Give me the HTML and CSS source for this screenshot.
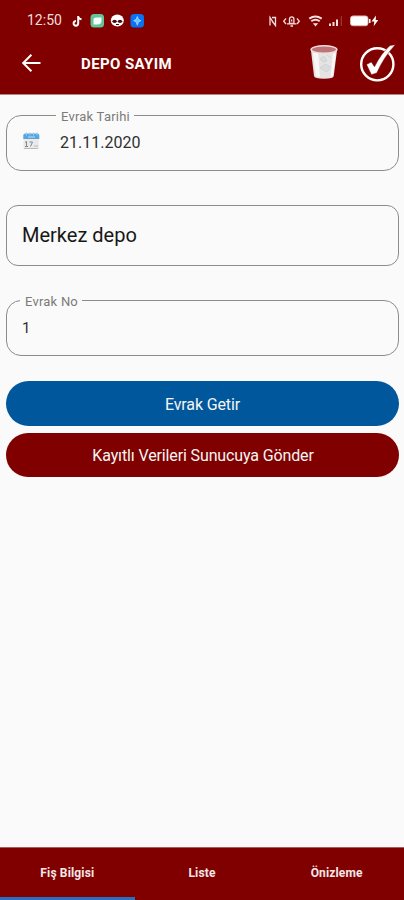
FILE: index.html
```html
<!DOCTYPE html>
<html lang="tr">
<head>
<meta charset="utf-8">
<title>Depo Sayım</title>
<link rel="stylesheet" href="styles.css">
</head>
<body>
<header class="header">
  <div class="status">
    <span class="clock">12:50</span>
    <svg class="status-apps" width="74" height="16" viewBox="0 0 74 16">
      <path d="M7.2 3v7.3a2.3 2.3 0 1 1-2.3-2.2M7.2 3c.2 2 1.600 3.100 3.300 3.200" fill="none" stroke="#fff" stroke-width="2"/>
      <rect x="19.500" y="1" width="13.500" height="13.500" rx="3.500" fill="#63c49b"/>
      <path d="M22.500 6.500q0-2 3-2h5v3q0 4-4 4h-4z" fill="#f3fff8"/>
      <ellipse cx="46.300" cy="7.500" rx="6.500" ry="5.900" fill="#fff"/>
      <ellipse cx="43.600" cy="8.300" rx="2.200" ry="1.600" fill="#4b0a0a"/><ellipse cx="49" cy="8.300" rx="2.200" ry="1.600" fill="#4b0a0a"/>
      <path d="M45 11.500h3" stroke="#4b0a0a"/>
      <rect x="59.500" y="1" width="13.500" height="13.500" rx="3.500" fill="#0873f4"/>
      <path d="M66.300 3.500l1.200 3 2.500 1.200-2.500 1.100-1.200 3.400-1.200-3.400-2.500-1.100 2.500-1.200z" fill="#75bdff" stroke="#b9e4ff" stroke-width=".7"/>
    </svg>
    <svg class="status-system" width="114" height="16" viewBox="0 0 114 16">
      <g fill="none" stroke="#f6dede" stroke-width="1.300">
        <path d="M3 12.500V4.500l4 6M5 4.500h3.500v8L5 8"/>
        <path d="M19 5.500l-2.300 2.700L19 11M30 5.500l2.300 2.700L30 11M22.500 10.500V6a2.200 2.200 0 0 1 4.400 0v4.500zM20 10.800h9.400M23.500 13h2.500M24.700 6.500v2"/>
        <path d="M42.300 5.600q6-4.400 12.400 0M44.300 8.300q4.200-3 8.400 0" stroke-width="2"/>
      </g>
      <path d="M45.800 10.300h5.400l-2.700 3.200zM62 10.500h2v2.500h-2zM65.500 9h2v4h-2zM69 6.500h2v6.500h-2z" fill="#f6dede"/>
      <path d="M73.800 3h1v10h-1z" fill="#a84444"/>
      <rect x="83.500" y="3" width="17.500" height="9.700" rx="2.500" fill="#fff" stroke="#e8b8b8"/>
      <path d="M102 6h1.500v4H102zM109 2.500l-4.500 6h2.800l-.6 4.800 4.600-6.200h-2.600z" fill="#fff"/>
    </svg>
  </div>
  <div class="toolbar">
    <svg class="back" width="20" height="20" viewBox="0 0 20 20"><path d="M19.500 10H2.500M10.400 1.800L2.200 10l8.200 8.200" fill="none" stroke="#fff" stroke-width="2"/></svg>
    <h1 class="title">DEPO SAYIM</h1>
    <svg class="trash" width="28" height="36" viewBox="0 0 28 36">
      <path d="M.8 5L4 32q.3 2.700 10 2.700T23.700 32l3.500-27z" fill="#e5e3e3"/>
      <path d="M3 9l3 23q2 1 4 1L8 9zM23 9l-2.500 24 2.500-1 3-23z" fill="#f8f6f6"/>
      <path d="M10 15l4-3 3 5-4 1zM10 24l5-4 6 3-4 5zM17 11l4 3" fill="#dadcdc" stroke="#d2d4d4"/>
      <ellipse cx="14" cy="5.500" rx="12.900" ry="3.800" fill="#bd7479" stroke="#f0dede" stroke-width="1.400"/>
    </svg>
    <svg class="check" width="38" height="40" viewBox="0 0 38 40">
      <circle cx="18.300" cy="21.300" r="16.100" fill="none" stroke="#fff" stroke-width="2.400"/>
      <path d="M7.500 21.500l4.800-2.600 3.200 4.800Q22 10.500 31 2.500l5.300-.8Q24.500 14.500 17.800 30l-5.400 1.700z" fill="#fff" stroke="#800000" stroke-width=".5"/>
    </svg>
  </div>
</header>
<main class="content">
  <div class="field field-date">
    <span class="label">Evrak Tarihi</span>
    <svg class="calendar" width="17" height="18" viewBox="0 0 17 18">
      <rect x=".5" y="6" width="15.500" height="11" fill="#eaeaea"/>
      <path d="M.3 7V3.500q0-2 2-2h12q2 0 2 2V7z" fill="#59a6df"/>
      <path d="M3.500.5v3M7 .5v3M10.500.5v3M14 .5v3" stroke="#9bcbed"/>
      <path d="M5 5h7" stroke="#b9dcf3"/>
      <path d="M2 10.500l1.500-1v5M2 14.500h3M6.500 10h3l-2 4.500" fill="none" stroke="#888"/>
      <path d="M11 14h4M1 16.500h14" stroke="#bbb"/>
    </svg>
    <span class="value">21.11.2020</span>
  </div>
  <div class="field field-depot"><span class="value">Merkez depo</span></div>
  <div class="field field-number">
    <span class="label">Evrak No</span>
    <span class="value">1</span>
  </div>
  <button class="button button-fetch"><span>Evrak Getir</span></button>
  <button class="button button-send"><span>Kayıtlı Verileri Sunucuya Gönder</span></button>
</main>
<nav class="tabs">
  <a class="tab active">Fiş Bilgisi</a>
  <a class="tab">Liste</a>
  <a class="tab">Önizleme</a>
</nav>
</body>
</html>
```
FILE: styles.css
```css
* { box-sizing: border-box; }
body {
  margin: 0;
  height: 900px;
  display: flex;
  flex-direction: column;
  overflow: hidden;
  background: #fafafa;
  font-family: Roboto, sans-serif;
}
svg { display: block; flex: none; }
.header {
  height: 95px;
  background: #800000;
  border-bottom: 1px solid #b98383;
  color: #fff;
}
.status { height: 40px; display: flex; align-items: center; padding: 1px 23px 0 27px; }
.clock { width: 44px; margin-top: -1px; font-size: 14px; color: #f4dddd; }
.status-system { margin-left: auto; }
.toolbar { height: 54px; display: flex; align-items: center; padding: 0 7px 0 21px; }
.back { margin-top: -8px; }
.title { margin: -6px 0 0 40px; font-size: 15px; line-height: 20px; font-weight: 700; letter-spacing: .4px; white-space: nowrap; }
.trash { margin: -10px 0 0 auto; }
.check { margin: -9px 0 0 21px; }
.content { flex: 1; padding: 20px 5px 0 6px; display: flex; flex-direction: column; }
.field {
  position: relative;
  display: flex;
  align-items: center;
  border: 1px solid #8c8c8c;
  border-radius: 15px;
  padding-left: 16px;
}
.field-date { height: 56px; }
.field-depot { height: 61px; margin-top: 34px; padding-left: 15px; border-radius: 12px; }
.field-number { height: 56px; margin-top: 34px; padding-left: 15px; }
.label {
  position: absolute;
  top: -7px;
  left: 49px;
  padding: 0 4px 0 5px;
  background: #fafafa;
  color: #7b7b7b;
  font-size: 13px;
  line-height: 16px;
  letter-spacing: .22px;
  white-space: nowrap;
}
.field-number .label { left: 13px; }
.calendar { margin-top: -5px; }
.field-date .value { margin: 0 0 1px 20px; font-size: 16px; color: #303030; }
.field-depot .value { margin-top: -1px; font-size: 20px; color: #171717; }
.field-number .value { margin-top: -1px; font-size: 15px; color: #303030; }
.button {
  border: 0;
  border-radius: 23px;
  padding: 0;
  height: 45px;
  color: #f5f5f5;
  font: 16px Roboto, sans-serif;
  letter-spacing: -.13px;
}
.button-fetch { margin-top: 25px; padding-top: 1px; background: #00579c; }
.button-send { margin-top: 7px; padding-left: 1px; background: #800000; height: 44px; }
.tabs {
  height: 53px;
  display: grid;
  grid-template-columns: repeat(3, 1fr);
  background: #800000;
  border-top: 1px solid #a85c5c;
}
.tab {
  display: flex;
  align-items: center;
  justify-content: center;
  border-bottom: 3px solid transparent;
  color: #f6e8e8;
  font-size: 12px;
  font-weight: 700;
  letter-spacing: .15px;
}
.tab.active { border-bottom-color: #2e6dc0; }
```
